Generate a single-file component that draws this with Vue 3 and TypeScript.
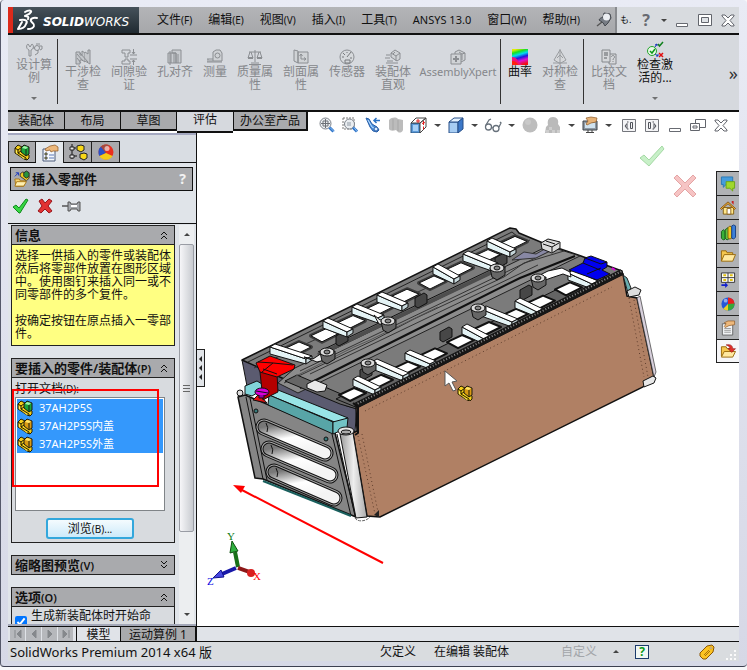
<script setup lang="ts">
import { ref } from 'vue'

interface MenuEntry { label: string; key?: string }
interface Command { icon: string; lines: string[]; active?: boolean; drop?: boolean; kind?: string; sep?: boolean; high?: boolean }
interface Doc { name: string; icon: string }

const menus: MenuEntry[] = [
  { label: '文件', key: '(F)' },
  { label: '编辑', key: '(E)' },
  { label: '视图', key: '(V)' },
  { label: '插入', key: '(I)' },
  { label: '工具', key: '(T)' },
  { label: 'ANSYS 13.0' },
  { label: '窗口', key: '(W)' },
  { label: '帮助', key: '(H)' },
]

const commands: Command[] = [
  { icon: 'study', lines: ['设计算', '例'], drop: true, high: true, sep: true },
  { icon: 'interfere', lines: ['干涉检', '查'] },
  { icon: 'clearance', lines: ['间隙验', '证'] },
  { icon: 'hole', lines: ['孔对齐'] },
  { icon: 'measure', lines: ['测量'], kind: 'narrow' },
  { icon: 'mass', lines: ['质量属', '性'] },
  { icon: 'section', lines: ['剖面属', '性'] },
  { icon: 'sensor', lines: ['传感器'] },
  { icon: 'visual', lines: ['装配体', '直观'] },
  { icon: 'xpert', lines: ['AssemblyXpert'], kind: 'wide', sep: true },
  { icon: 'curvature', lines: ['曲率'], kind: 'narrow', active: true },
  { icon: 'symmetry', lines: ['对称检', '查'], sep: true },
  { icon: 'compare', lines: ['比较文', '档'] },
  { icon: 'checkActive', lines: ['检查激', '活的...'], active: true, drop: true, high: true },
]

const tabs = [
  { name: '装配体', cls: 'first' },
  { name: '布局', cls: '' },
  { name: '草图', cls: '' },
  { name: '评估', cls: '' },
  { name: '办公室产品', cls: 'long' },
]
const currentTab = ref('评估')

const viewTools = [
  'zoomFit', 'zoomArea', 'prevView', 'sectionView', 'orient', 'arrow', 'style', 'arrow',
  'glasses', 'arrow', 'sphere', 'scene', 'arrow', 'display', 'arrow',
]
const docTools = ['tileLeft', 'tileRight', 'min', 'restore2', 'close']
const panelTabs = ['assembly', 'property', 'config', 'ball']
const taskTabs = ['chat', 'home', 'books', 'folder', 'palette', 'globe', 'form', 'recent']

const docs: Doc[] = [
  { name: '37AH2P5S', icon: 'assembly' },
  { name: '37AH2P5S内盖', icon: 'part' },
  { name: '37AH2P5S外盖', icon: 'part' },
]

/* Stepped bracket with a raised block behind it. */
const bracket = (block: string, top: string) =>
  `<path d="M1 4l3-3 4 2v3l7 5v3l-2 2-3-1-9-6z" fill="#f5cf1a" stroke="#221c00"/><path d="M1 4l3 2v3l8 5v2M4 6l4-3M4 9l3-2" fill="none" stroke="#221c00"/><path d="M2 6l1 1v3l7 4v1L2 9z" fill="#fff068"/><path d="M7 4l3-3 5 2v7l-3 2-5-4z" fill="${block}" stroke="#1a1a10"/><path d="M8 4l2-2 4 1-2 2z" fill="${top}"/><path d="M12 5v6" stroke="#1a1a10"/>`

const icons: Record<string, string> = {
  study: '<g fill="none" stroke="#8b8e92"><path d="M2 2l2 3 2-3c2 1 2 5-1 6v6H3V8C0 7 0 3 2 2z"/><circle cx="11" cy="6" r="2.500"/><path d="M7 6h2M12 8v3l-3 2M13 4h3v3l-2 1M10 2h4"/></g>',
  interfere: '<g fill="#c5c8cc" stroke="#8b8e92"><path d="M1 3h4v3h2V2l3 2v9L7 11H5v4H1z"/><path d="M10 3l3 2V1h2v14l-5-3"/><path d="M2 5l6 7M5 4l8 9M2 9l4 5" fill="none"/></g>',
  clearance: '<g fill="none" stroke="#8b8e92"><path d="M1 1h8v3H7v4H4V4H1zM1 15h8v-3H7v-2H4v2H1zM9 6h7M9 10h7M12.500 0v5M11 3l1.500 2L14 3M12.500 16v-5M11 13l1.500-2 1.500 2"/></g>',
  hole: '<g fill="#c9ccd0" stroke="#8b8e92"><path d="M1 4h8v10H1zM5 1h9v13H9V4H5z"/><path d="M4 4v10M7 4v10M11 5v9M3 2v14" fill="none"/></g>',
  measure: '<g fill="#cfd2d5" stroke="#8b8e92"><path d="M6 3l3-2h4l2 3v8H6z"/><circle cx="10.500" cy="6.500" r="2.500"/><path d="M0 13h15M1 10v3M3 11v2M5 11v2M0 10h6" fill="none"/></g>',
  mass: '<g fill="none" stroke="#8b8e92"><path d="M8 1v12M2 3h12M3 3L1 9h5L4 3M12 3l-2 6h5l-2-6M4 14h8M2 15.500h12"/><path d="M1 9h5M10 9h5" stroke-width="2"/></g>',
  section: '<g fill="#d0d3d6" stroke="#8b8e92"><path d="M1 1l4 1v12l-4-2zM5 3h10v11H5z"/><path d="M8 5v5h5M6.500 7L8 5l1.500 2M11 8.500l2 1.500-2 1.500" fill="none"/></g>',
  sensor: '<circle cx="8" cy="8" r="7" fill="#d6d9dc" stroke="#8b8e92"/><path d="M8 8l4-5M3 8h2M8 3v1M11 9h2M4 4l2 2M6 11h5v3H6z" fill="none" stroke="#77797c"/>',
  visual: '<g fill="#d0d3d6" stroke="#8b8e92"><path d="M6 4l4-3 5 3v6l-3 2-6-4z"/><path d="M6 4l5 3 4-3M11 7v5M1 6h4M0 9h5M2 12h6M1 14h12M8 5l2-2" fill="none"/></g>',
  xpert: '<g fill="#d0d3d6" stroke="#8b8e92"><path d="M1 5h10v10H1zM5 5V3l4-2 6 3v7l-4 2"/><path d="M6 7v6M3 10h6" stroke-width="2"/><path d="M9 3l3 2 3-1M12 5v6" fill="none"/></g>',
  curvature: '<defs><linearGradient id="rb" x1="0.300" y1="0" x2="0.600" y2="1"><stop offset="0" stop-color="#e4ec00"/><stop offset=".18" stop-color="#18e020"/><stop offset=".36" stop-color="#00dcf0"/><stop offset=".55" stop-color="#2018e0"/><stop offset=".75" stop-color="#e010d0"/><stop offset="1" stop-color="#f01010"/></linearGradient></defs><path d="M0 0h16v16H0z" fill="url(#rb)"/><path d="M0 8c6 0 6 6 10 8H0z" fill="#f0107a"/><path d="M0 12c4 0 5 2 7 4H0z" fill="#ff2010"/>',
  symmetry: '<g fill="#d6d8db" stroke="#999ca0"><path d="M8 1L2 11l5 3h2l5-3z"/><path d="M8 0v16M5 9l3-3 3 3M1 14h14" fill="none"/></g>',
  compare: '<g fill="#d6d8db" stroke="#85888c"><path d="M1 1h8v12H1zM9 5h6v10H8v-2"/><path d="M3 4h4M3 6h4M3 9h3" fill="none" stroke-width="1.500"/><path d="M10.500 8c0-2 3-2 3 0 0 1.500-1.500 1-1.500 3M12 12v1" fill="none"/></g>',
  checkActive: '<circle cx="5" cy="9" r="4.500" fill="#e9f7e9" stroke="#22a52a"/><path d="M3 9l2 2 3-4" fill="none" stroke="#0c9a18" stroke-width="1.500"/><path d="M8 5l2-3M8 3l2-1v2M8 12l3 2M11 12v2H9" fill="none" stroke="#1a36c0"/><path d="M11 2l1.500 2L16 0" fill="none" stroke="#10801c" stroke-width="1.500"/><path d="M12 11l4 4M16 11l-4 4" stroke="#e01010" stroke-width="1.500"/>',
  zoomFit: '<circle cx="6.500" cy="6.500" r="5.500" fill="#eef1f4" stroke="#7a8088"/><path d="M4 4h5v5H4zM6.500 2v9M2 6.500h9" fill="none" stroke="#6b7076"/><path d="M10.500 10.500l4 4" stroke="#2f74c8" stroke-width="3"/><path d="M11 10.500l4 4" stroke="#8cc0f4"/>',
  zoomArea: '<path d="M1 1h11v11H1z" fill="none" stroke="#777" stroke-dasharray="2 1"/><circle cx="7.500" cy="7" r="5" fill="#e9edf1" stroke="#7a8088"/><path d="M5 5h4v4H5z" fill="#bcc3ca"/><path d="M11 10.500l4 4" stroke="#2f74c8" stroke-width="3"/><path d="M12 10.500l3 4" stroke="#8cc0f4"/>',
  prevView: '<path d="M1 1l3 1 3 5 5 3 2 3-2 2-4-1-3-4z" fill="#4a90dc" stroke="#2a5fa8"/><path d="M3 3l4 7 5 3" fill="none" stroke="#bfe0ff"/><path d="M15 3.500H9M11.500 1L9 3.500 11.500 6" fill="none" stroke="#2a72c4" stroke-width="1.500"/><circle cx="11" cy="12" r="2" fill="#d8ecff" stroke="#2a5fa8"/>',
  sectionView: '<path d="M1 3c3-3 7-3 9-1l5 1v10c-1 3-4 3-5 2l-2-2c-3 1-6 1-7-1z" fill="#bcbcbc"/><path d="M5 2v11M10 3v11" stroke="#a6a6a6"/>',
  orient: '<path d="M0 6h9v10H0z" fill="#5c9ad8" stroke="#27507c"/><path d="M2 8h5v6H2z" fill="#a8d0f6"/><path d="M0 6l5-5h10l-6 5zM9 6l6-5v9l-6 6z" fill="#fff" stroke="#444"/><path d="M7 2v4M5 4h4M12.500 4v4M11 6.500l3-1M12.500 9.500v3" stroke="#e02020"/>',
  style: '<path d="M1 5h9v11H1z" fill="#a7cdf3" stroke="#274f88"/><path d="M1 5l5-4h9l-5 4z" fill="#e4f2ff" stroke="#274f88"/><path d="M10 5l5-4v11l-5 4z" fill="#3c78c8" stroke="#274f88"/>',
  glasses: '<g fill="none" stroke="#67717b" stroke-width="1.300"><circle cx="3.500" cy="10" r="3"/><circle cx="11" cy="11.500" r="3"/><path d="M6.500 10.500l1.500.5M1 8l3-5 2-1M14 10l2-4-1-1"/></g>',
  sphere: '<circle cx="8" cy="8" r="7.500" fill="#bdbdbd"/><circle cx="6" cy="5" r="3" fill="#c9c9c9"/>',
  scene: '<path d="M8 0c4 0 6 3 5 7l2 3v6H0l1-6 2-2C2 3 4 0 8 0z" fill="#bababa"/><path d="M1 13h3v3H1zM7 13h3v3H7zM12 13h3v3h-3zM4 10h3v3H4z" fill="#cecece"/>',
  display: '<path d="M1 4h14v9H1z" fill="#8e99a4" stroke="#3c4248"/><path d="M3 6h10v5H3z" fill="#cfe2ef"/><path d="M6 13v2M4 15.500h8M10 13v2" stroke="#444"/><path d="M4 1l5-1 6 1-1 4-5 1-4 2-1-1 2-3z" fill="#e6b277" stroke="#8e5a25" stroke-width=".7"/>',
  tileLeft: '<path d="M1.500 2.500h13v12h-13z" fill="#f4f4f6" stroke="#74767c"/><path d="M6 6.500v5L4 9zM7.500 5H6M7.500 12H6M9.500 5.500h2v6h-2z" fill="none" stroke="#50535a"/>',
  tileRight: '<path d="M1.500 2.500h13v12h-13z" fill="#f4f4f6" stroke="#74767c"/><path d="M10 6.500v5L12 9zM8.500 5H10M8.500 12H10M4.500 5.500h2v6h-2z" fill="none" stroke="#50535a"/>',
  min: '<path d="M2.500 11.500h11v3h-11z" fill="#fff" stroke="#686b72"/>',
  max: '<path d="M1.500 2.500h13v11h-13z" fill="#fff" stroke="#62656c"/><path d="M4.500 5.500h7v5h-7z" fill="#dfe2e6" stroke="#62656c"/>',
  restore2: '<path d="M5.500 2.500h10v8h-10z" fill="#fff" stroke="#62656c"/><path d="M.5 6.500h9v7h-9z" fill="#fff" stroke="#62656c"/><path d="M3 9h4v2H3z" fill="none" stroke="#62656c"/>',
  close: '<path d="M2 3h3l3 3 3-3h3v1L10 8.500l4 4.500v1h-3l-3-3-3 3H2v-1l4-4.500L2 4z" fill="#fff" stroke="#62656c"/>',
  assembly: bracket('#19a53a', '#a0f4a8'),
  part: bracket('#d99a12', '#ffe668'),
  property: '<path d="M1 4h12v12H1z" fill="#f4f8fc" stroke="#4a5a7a"/><path d="M3 8h2v2H3zM3 12h2v2H3z" fill="#d8e020" stroke="#445"/><path d="M7 10h5M7 13h5" stroke="#5a78b8"/><path d="M3 4l5-3 5-1 3 2v4l-5 0-2 1-1-2-4 1z" fill="#edb87b" stroke="#8a5420" stroke-width=".7"/>',
  config: '<path d="M2 0v15M2 4h4M2 12h5" fill="none" stroke="#111"/><path d="M0 3h4v3H0zM0 11h4v3H0z" fill="#e8e8e8" stroke="#222"/><path d="M7 2l4-1 3 1v4l-3 2-4-2zM10 10l4-1 3 1v4l-3 2-4-2z" fill="#f8d818" stroke="#222"/>',
  ball: '<circle cx="8" cy="8" r="7.500" fill="#e83020"/><path d="M8 9L3 2.500A7.500 7.500 0 0 0 1.500 12z" fill="#2850c8"/><path d="M8 9l-6.500 3a7.500 7.500 0 0 0 13 0z" fill="#f4cc18"/><path d="M3 2.500c3-3 7-2 9-1-3 1-5 3-4 7.500z" fill="#a8483c"/><circle cx="9" cy="4.500" r="2.500" fill="#fff" opacity=".6"/>',
  globe: '<circle cx="8" cy="8.500" r="7" fill="#2558d8"/><path d="M8 8.500v-7a7 7 0 0 1 7 7z" fill="#e82020"/><path d="M8 8.500L15 8a7 7 0 0 1-7 7.500z" fill="#38a838"/><path d="M8 8.500v7c-2 0-4-1-5-2z" fill="#f0d020"/><circle cx="5.500" cy="5" r="2" fill="#fff" opacity=".5"/>',
  insert: '<path d="M1 9h5l1 2h6l-2 6H2z" fill="#f9d774" stroke="#a87410"/><path d="M3 12h11l-3 5H1z" fill="#fff0b0" stroke="#a87410"/><path d="M1 6l4-4M2 2h3v3" fill="none" stroke="#1030c0"/><path d="M7 3l3-2 3 2 4 3v2l-3 3-7-5z" fill="#f0cc20" stroke="#333"/><path d="M11 2l3-2 3 2v4l-3 2-3-2z" fill="#28943c" stroke="#222"/>',
  ok: '<path d="M1 9l3-2 3 3 7-9 2 1-8 13H7z" fill="#36d642" stroke="#0f8a1b"/>',
  cancel: '<path d="M2 3l3-2 3 4 4-4 3 2-4 5 4 5-3 2-4-4-4 4-3-2 4-5z" fill="#e23232" stroke="#98151b"/>',
  pushpin: '<path d="M0 8h7" stroke="#555" stroke-width="1.500"/><path d="M6 4h2l1 2h6l1-2h2v9h-2l-1-2H9l-1 2H6z" fill="#a4a7ac" stroke="#555"/><path d="M9 8h6" stroke="#fff" stroke-width="2"/>',
  chat: '<path d="M1 1h12v8H6l-3 3V9H1z" fill="#469cdc" stroke="#2978b4"/><path d="M6 6h9v7h-2v3l-3-3H6z" fill="#a0d82c" stroke="#6ca612"/>',
  home: '<path d="M3 8h11v7H3z" fill="#ffe88c" stroke="#856010"/><path d="M0 9l8-7 8 7-1 1-7-6-7 6z" fill="#f8c038" stroke="#855010"/><path d="M12 1h2v4l-2-2z" fill="#c82020"/><path d="M7 9h4v6H7z" fill="#fff" stroke="#906820"/>',
  books: '<path d="M1 8l2-2 2 2v8l-2 1-2-2z" fill="#38b038" stroke="#145c18"/><path d="M5 6l3-2 2 2v9l-3 2-2-2z" fill="#60c040" stroke="#145c18"/><path d="M8 4l2-2 2 2v11l-2 1-2-1z" fill="#f0c820" stroke="#80600a"/><path d="M12 2l2-1 2 1v12l-2 2-2-1z" fill="#3c80d8" stroke="#163e80"/>',
  folder: '<path d="M1 14V3h5l1 2h6v3" fill="#f5c74e" stroke="#98680a"/><path d="M1 14l3-7h12l-3 7z" fill="#ffe9a0" stroke="#98680a"/>',
  palette: '<path d="M1 1h14v10H1zM8 1v10M1 6h14" fill="#fff" stroke="#333"/><path d="M3 3.500h3M10 3.500h3M10 8.500h3M3 8.500h3" stroke="#e0c010" stroke-width="2"/><path d="M1 13h4v-2l3 3-3 3v-2H1z" fill="#1020d0"/>',
  form: '<path d="M2 4h11v12H2z" fill="#f0f2f4" stroke="#666"/><path d="M4 9h7M4 11h7M4 13h7" stroke="#999"/><path d="M4 3l4-2 7 0v4l-6 1-4 2-1-1 2-3z" fill="#edb87b" stroke="#8a5420" stroke-width=".7"/>',
  recent: '<path d="M1 14V4h5l1 2h5v3" fill="#f5c74e" stroke="#98680a"/><path d="M1 15l3-6h12l-3 6z" fill="#ffe9a0" stroke="#98680a"/><path d="M6 2c5-1 7 1 7 4h3l-4 4-4-4h2c0-2-1-3-4-4z" fill="#e03028" stroke="#8c1010" stroke-width=".6"/>',
  tag: '<path d="M1 9l7-7 5-1 2 2-1 5-7 7-3 0-3-3z" fill="#fbc322" stroke="#8a5606"/><path d="M5 11l5-5M6 12l5-5" stroke="#a8720c"/><circle cx="12" cy="4" r="1" fill="#fff" stroke="#8a5606" stroke-width=".5"/>',
  pin: '<path d="M1 14l5-4" stroke="#555" stroke-width="1.500"/><path d="M3 8c1-2 2-2 4-3l1-4 6 1 1 4-3 5-3 3c-1-1-1-3-3-4z" fill="#777c84" stroke="#44484e"/><circle cx="10.500" cy="5" r="3.500" fill="#eceef2"/>',
}

/* Window openings of the tray, spaced evenly along the pack. */
const openings = Array.from({ length: 9 }, (_, i) => i)
const rearOpening = (i: number) => quad(297 + i * 27, 348 - i * 13.2)
const frontOpening = (i: number) => quad(352 + i * 27, 394 - i * 13.2)
function quad(x: number, y: number): string {
  return `${x - 13},${y + 1} ${x + 2},${y - 6} ${x + 14},${y - 1} ${x - 2},${y + 7}`
}

/* Bus bars: start and end of each strip's upper edge. */
const bars = [
  [270, 347, 306, 358], [323, 321, 347, 331], [352, 307, 378, 317], [377, 295, 402, 305],
  [433, 267, 454, 278], [463, 254, 492, 265], [487, 241, 510, 251],
  [568, 273, 592, 283], [515, 301, 537, 311], [481, 309, 512, 321], [462, 327, 484, 338],
  [405, 353, 430, 363], [372, 362, 403, 375], [353, 379, 375, 389],
]
const barTop = (b: number[]) => `${b[0]},${b[1]} ${b[0] + 5},${b[1] - 3} ${b[2] + 6},${b[3] - 2} ${b[2]},${b[3] + 1}`
const barFace = (b: number[]) => `${b[0]},${b[1]} ${b[2]},${b[3] + 1} ${b[2]},${b[3] + 6} ${b[0]},${b[1] + 7}`
const barEnd = (b: number[]) => `${b[2]},${b[3] + 1} ${b[2] + 6},${b[3] - 2} ${b[2] + 6},${b[3] + 2} ${b[2]},${b[3] + 6}`
const bolts = [[327, 352], [388, 321], [497, 268], [368, 363], [478, 308], [538, 278]]
const clips = [[341, 336], [420, 298], [445, 332], [525, 290], [365, 370], [500, 258]]
const slots = [[264, 427, 325, 453], [269, 449, 330, 475], [274, 472, 334, 498]]
</script>

<template>
  <div class="window">
    <header class="titlebar">
      <div class="brand">
        <svg class="ds" viewBox="0 0 22 24" aria-hidden="true">
          <g fill="none" stroke="#fff" stroke-width="2" stroke-linejoin="round" stroke-linecap="round">
            <path d="M8 4c3-2 7-2 6 0-1 2-4 3-6 4 3 0 4 1 3 3" />
            <path d="M3 12c6-1 8 1 6 4-1 3-4 5-8 5l4-7" />
            <path d="M20 10c-4-1-7 1-6 3 1 2 4 3 3 5-1 3-4 3-6 3" />
          </g>
        </svg>
        <span class="brand-name"><b>SOLID</b>WORKS</span>
      </div>
      <nav class="menus">
        <button v-for="m in menus" :key="m.label" type="button" :class="{ latin: !m.key }">{{ m.label }}<small v-if="m.key">{{ m.key }}</small></button>
        <svg class="ic pin" viewBox="0 0 16 16" v-html="icons.pin" />
      </nav>
      <div class="win-tools">
        <span class="partial">も.</span>
        <button type="button" class="help">?</button>
        <i class="down" />
        <button type="button" aria-label="最小化"><svg class="ic" viewBox="0 0 16 16" v-html="icons.min" /></button>
        <button type="button" aria-label="还原"><svg class="ic" viewBox="0 0 16 16" v-html="icons.max" /></button>
        <button type="button" aria-label="关闭"><svg class="ic" viewBox="0 0 16 16" v-html="icons.close" /></button>
      </div>
    </header>

    <div class="ribbon">
      <button
        v-for="c in commands" :key="c.icon" type="button" class="cmd"
        :class="[c.kind, { active: c.active, sep: c.sep, high: c.high }]"
      >
        <svg class="ic" viewBox="0 0 16 16" v-html="icons[c.icon]" />
        <span v-for="l in c.lines" :key="l">{{ l }}</span>
        <i v-if="c.drop" class="down" />
      </button>
      <button type="button" class="more" aria-label="更多">»</button>
    </div>

    <div class="tabrow">
      <div class="tabs">
        <button
          v-for="t in tabs" :key="t.name" type="button" :class="[t.cls, { on: t.name === currentTab }]"
          @click="currentTab = t.name"
        >{{ t.name }}</button>
      </div>
      <div class="viewtools">
        <template v-for="(v, i) in viewTools" :key="i">
          <i v-if="v === 'arrow'" class="down slot" />
          <button v-else type="button" :aria-label="v"><svg class="ic" viewBox="0 0 16 16" v-html="icons[v]" /></button>
        </template>
        <span class="push" />
        <button v-for="d in docTools" :key="d" type="button" :aria-label="d"><svg class="ic" viewBox="0 0 16 16" v-html="icons[d]" /></button>
      </div>
    </div>

    <main class="body">
      <aside class="panel">
        <div class="ptabs">
          <button v-for="(p, i) in panelTabs" :key="p" type="button" :class="{ on: i === 1 }" :aria-label="p">
            <svg class="ic" viewBox="0 0 16 16" v-html="icons[p]" />
          </button>
        </div>
        <div class="phead">
          <div class="ptitle">
            <svg class="ic wide-ic" viewBox="0 0 18 18" v-html="icons.insert" />
            <h1>插入零部件</h1>
            <button type="button" class="q">?</button>
          </div>
          <div class="pact">
            <button type="button" aria-label="确定"><svg class="ic" viewBox="0 0 16 16" v-html="icons.ok" /></button>
            <button type="button" aria-label="取消"><svg class="ic" viewBox="0 0 16 16" v-html="icons.cancel" /></button>
            <button type="button" aria-label="保持可见"><svg class="ic wide-ic" viewBox="0 0 18 16" v-html="icons.pushpin" /></button>
          </div>
        </div>
        <div class="pscroll">
          <div class="groups">
            <section class="group">
              <button type="button" class="ghead"><span>信息</span><svg viewBox="0 0 8 10"><path d="M1 5l3-3 3 3M1 9l3-3 3 3" /></svg></button>
              <div class="info">
                <p>选择一供插入的零件或装配体<br>然后将零部件放置在图形区域<br>中。使用图钉来插入同一或不<br>同零部件的多个复件。</p>
                <p>按确定按钮在原点插入一零部<br>件。</p>
              </div>
            </section>
            <section class="group">
              <button type="button" class="ghead"><span>要插入的零件/装配体<small>(P)</small></span><svg viewBox="0 0 8 10"><path d="M1 5l3-3 3 3M1 9l3-3 3 3" /></svg></button>
              <div class="gbody">
                <span id="docs-label" class="lbl">打开文档<small>(D):</small></span>
                <ul class="list" role="listbox" aria-labelledby="docs-label" aria-multiselectable="true">
                  <li v-for="d in docs" :key="d.name" role="option" aria-selected="true">
                    <svg class="ic" viewBox="0 0 16 16" v-html="icons[d.icon]" />{{ d.name }}
                  </li>
                </ul>
                <button type="button" class="browse">浏览<small>(B)...</small></button>
                <div class="mark" />
              </div>
            </section>
            <section class="group">
              <button type="button" class="ghead"><span>缩略图预览<small>(V)</small></span><svg viewBox="0 0 8 10"><path d="M1 1l3 3 3-3M1 5l3 3 3-3" /></svg></button>
            </section>
            <section class="group">
              <button type="button" class="ghead"><span>选项<small>(O)</small></span><svg viewBox="0 0 8 10"><path d="M1 5l3-3 3 3M1 9l3-3 3 3" /></svg></button>
              <label class="opt"><input type="checkbox" checked><span>生成新装配体时开始命</span></label>
            </section>
          </div>
          <div class="sbar">
            <i class="up" />
            <div class="thumb"><i /><i /><i /></div>
            <i class="down" />
          </div>
        </div>
      </aside>

      <section class="viewport">
        <svg class="scene" viewBox="197 133 542 493" preserveAspectRatio="xMinYMin meet" role="img" aria-label="装配体模型">
          <defs>
            <linearGradient id="slot" x1="0" y1="0" x2="0.400" y2="1"><stop offset="0" stop-color="#777" /><stop offset=".5" stop-color="#fff" /><stop offset="1" stop-color="#f4f4f4" /></linearGradient>
            <linearGradient id="post" x1="0" y1="0" x2="1" y2="0"><stop offset="0" stop-color="#999" /><stop offset=".5" stop-color="#eee" /><stop offset="1" stop-color="#aaa" /></linearGradient>
          </defs>

          <g stroke-linejoin="round">
            <path d="M242 360l5 26 32 14 76 32 2-26z" fill="#5b5b70" stroke="#111" />
            <path d="M242 360L510 228l6 1 3 4 24 10 38 13 41 15 1 5-267 132-8-2-66-28z" fill="#7b7b7b" stroke="#111" stroke-width="1.500" />
            <path d="M248 362L512 232l6 5" fill="none" stroke="#222" />
            <path d="M254 368L530 240" fill="none" stroke="#333" />
            <path d="M295 368L548 246l32 10-282 137-20-10z" fill="#8c8c8c" stroke="#222" />
            <path d="M300 371L552 250M310 374L538 265M284 383l90-43 40-21 90-42 20-14 40-12" fill="none" stroke="#333" />
            <path d="M300 388l60-30 60-30 100-50 55-22" fill="none" stroke="#111" stroke-width="2" />
            <path d="M318 355L505 266" stroke="#4e4e4e" stroke-width="4" /><path d="M318 352L505 263" stroke="#111" />
            <path d="M512 260l12-8 12 2 14-8 6 2-20 10z" fill="#8888a4" stroke="#333" />
            <path d="M285 381l12-6 58 25 5 10-20-6z" fill="#666" stroke="#111" />
            <path d="M296 376l58-29 14-6 70-34" fill="none" stroke="#555" />
            <path d="M336 399L590 273l26 8-258 127z" fill="#646464" stroke="#111" />
          </g>

          <g stroke="#111" stroke-linejoin="round">
            <g fill="#666"><polygon v-for="i in openings" :key="'rs' + i" :points="rearOpening(i)" stroke-width="4" stroke="#3c3c3c" /></g>
            <g fill="#fff"><polygon v-for="i in openings" :key="'r' + i" :points="rearOpening(i)" /></g>
            <g fill="#fff"><polygon v-for="i in openings" :key="'f' + i" :points="frontOpening(i)" stroke-width="2" /></g>
            <path v-for="(c, i) in clips" :key="'c' + i" :d="`M${c[0] - 5} ${c[1]}l9-5 3 2v8l-9 5-3-2z`" fill="#474747" />
            <template v-for="(b, i) in bars" :key="'b' + i">
              <polygon :points="barFace(b)" fill="#e4f3f5" />
              <polygon :points="barTop(b)" fill="#fff" />
              <polygon :points="barEnd(b)" fill="#c4d4d8" />
            </template>
            <path d="M304 357l9 2 9-6 6-3 6 3-5 6-12 3z" fill="#eee" />
            <path d="M374 315l6 5 7-2 6 2-4 5-10-1z" fill="#eee" />
            <path d="M570 272l-8-4-14 3-14 7 3 5 14-5 12-4 8 3z" fill="#fff" />
            <template v-for="(b, i) in bolts" :key="'n' + i">
              <path :d="`M${b[0] - 7} ${b[1]}l2 9 5 3 8-5v-8z`" fill="#666" />
              <ellipse :cx="b[0]" :cy="b[1]" rx="7" ry="4" fill="#ddd" />
              <ellipse :cx="b[0]" :cy="b[1]" rx="3" ry="2" fill="#888" />
            </template>
            <path d="M541 243l7-4 12 3v6l-8 5-10-4z" fill="#ddd" /><path d="M543 244l9 3 7-4M552 247v5M546 241l9 3" fill="none" />
            <path d="M307 384l8-4 12 5-2 6-8 1-10-4z" fill="#e8e8e8" />
          </g>

          <path d="M356 408L623 274l4 22 10 2 17 79-11 10-263 130-13-1-14-83 4-2z" fill="#b08064" stroke="#111" stroke-width="1.500" />
          <path d="M355 406L622 272" stroke="#161616" stroke-width="6" />
          <path d="M355 405L622 271" stroke="#8c8c8c" stroke-width="2" stroke-dasharray="1 2" />
          <path d="M365 411L612 287M358 436l17 78M362 434l16 78M629 298l15 79M634 300l14 77" fill="none" stroke="#5e3d2c" stroke-dasharray="1 3" />
          <path d="M637 298l3-2 16 76-2 5z" fill="#d8d0dc" stroke="#333" stroke-width=".7" />
          <path d="M623 275l4 3 4 10-3 5z" fill="#69afb0" stroke="#222" />
          <path d="M627 291l8-4 6 3-2 5-10 2z" fill="#ddd" stroke="#111" />
          <path d="M643 381l10-5 3 2-2 5-10 4z" fill="#e8e8e8" stroke="#111" />
          <path d="M374 515l5-5v7z" fill="#222" />

          <g stroke="#111" stroke-linejoin="round">
            <path d="M238 397l7-2 90 38 21 84-93-38-8-1z" fill="#858585" stroke-width="1.500" />
            <path d="M246 397l17 82M250 398l17 82M332 434l19 82M337 434l18 82" fill="none" />
            <path d="M263 481l88 35" stroke="#195f5d" stroke-width="2" />
            <template v-for="(s, i) in slots" :key="'s' + i">
              <line :x1="s[0]" :y1="s[1]" :x2="s[2]" :y2="s[3]" stroke-width="17" stroke-linecap="round" />
              <line :x1="s[0]" :y1="s[1]" :x2="s[2]" :y2="s[3]" stroke="#a6a6a6" stroke-width="15" stroke-linecap="round" />
              <line :x1="s[0]" :y1="s[1]" :x2="s[2]" :y2="s[3]" stroke-width="13" stroke-linecap="round" />
              <line :x1="s[0]" :y1="s[1]" :x2="s[2]" :y2="s[3]" stroke="url(#slot)" stroke-width="11" stroke-linecap="round" />
              <path :d="`M${s[0] + 2} ${s[1] - 4}q3 5 1 9`" fill="none" />
            </template>
            <circle cx="256" cy="411" r="2" fill="#397b7b" /><circle cx="326" cy="439" r="2" fill="#397b7b" />
            <path d="M340 434l13-1 14 84-11 1z" fill="url(#post)" />
            <path d="M355 518c2 4 11 4 15-1" fill="none" stroke="#666" stroke-dasharray="3 1" />
            <path d="M253 400l14 3-8-9z" fill="#e01010" />
            <path d="M245 386l12-5 5 3v6l-10 6-7-2z" fill="#82d5da" />
            <path d="M269 395l9-5 70 28-11 5z" fill="#98e4e6" />
            <path d="M269 395l64 27v12l-65-29z" fill="#58a5a7" />
            <path d="M333 422l15-4-1 10-14 6z" fill="#72c3c5" />
            <ellipse cx="346" cy="431" rx="8" ry="4" fill="#e6e6e6" /><ellipse cx="346" cy="432" rx="5" ry="2" fill="#aaa" />
            <path d="M353 403l5 4v26l-3 2" fill="none" stroke-width="2" />
            <circle cx="240" cy="393" r="3" fill="#ddd" />
            <path d="M260 372l3 28 9-5 6-3-1-19z" fill="#b40000" />
            <path d="M256 363l14-7 25 9-1 4-17 8-17-5z" fill="#f00" />
            <path d="M262 372l11-9 20 2M273 363l-15-1M277 374l-14-5" fill="none" />
            <ellipse cx="262" cy="392" rx="7" ry="4" fill="#d800d8" /><path d="M256 391l12 2M259 395v3h5v-3" fill="#90a" />
            <path d="M569 270l14-7 2-5 6-2 16 6v5l-5 3 8 4-13 6z" fill="#0000f0" />
            <path d="M585 258l16 6 6-2M583 263l17 7M587 274l14-6" fill="none" />
          </g>
          <path d="M612 268l3 2" stroke="#e000e0" stroke-width="2" />

          <path d="M445 371v15l4-3 4 8 3-1-4-8 5-1z" fill="#fff" stroke="#555" />
          <svg x="457" y="385" width="16" height="16" viewBox="0 0 16 16" v-html="icons.part" />
          <path d="M383 563L240 489" stroke="#f00" stroke-width="2" /><path d="M233 485l12 1-4 7z" fill="#f00" />

          <path d="M640 158l4-3 5 5 13-14 2 3-15 17z" fill="#c8f0c8" stroke="#a4d8a4" />
          <path d="M674 178l3-3 8 8 8-8 3 3-8 8 8 8-3 3-8-8-8 8-3-3 8-8z" fill="#f6c4c4" stroke="#e4a4a4" />

          <path d="M238 567l-3-15" stroke="#187018" stroke-width="4" /><path d="M232 541l6 10-8 2z" fill="#30b040" stroke="#0c500c" />
          <path d="M238 568l14 5" stroke="#8c1818" stroke-width="4" /><circle cx="251" cy="573" r="4" fill="#d82020" />
          <path d="M236 568l-14 6" stroke="#1818a8" stroke-width="4" /><path d="M213 578l8-8 3 7z" fill="#4848e0" stroke="#10108c" />
          <g class="axis"><text x="227" y="540" fill="#0a7a14">Y</text><text x="253" y="580" fill="#f00">X</text><text x="207" y="585" fill="#0000e0">Z</text></g>
        </svg>
        <div class="taskpane">
          <button v-for="(t, i) in taskTabs" :key="t" type="button" :class="{ on: i === 7 }" :aria-label="t">
            <svg class="ic" viewBox="0 0 16 17" v-html="icons[t]" />
          </button>
        </div>
        <button type="button" class="splitter" aria-label="折叠面板"><i /><i /><i /></button>
      </section>
    </main>

    <div class="sheets">
      <div class="nav">
        <button type="button" aria-label="第一个"><svg viewBox="0 0 12 12"><path d="M3 2v8M9 2L5 6l4 4z" /></svg></button>
        <button type="button" aria-label="上一个"><svg viewBox="0 0 12 12"><path d="M8 2L4 6l4 4z" /></svg></button>
        <button type="button" aria-label="下一个"><svg viewBox="0 0 12 12"><path d="M4 2l4 4-4 4z" /></svg></button>
        <button type="button" aria-label="最后一个"><svg viewBox="0 0 12 12"><path d="M9 2v8M3 2l4 4-4 4z" /></svg></button>
      </div>
      <button type="button" class="sheet on">模型</button>
      <button type="button" class="sheet study">运动算例 1</button>
    </div>
    <footer class="status">
      <span>SolidWorks Premium 2014 x64 版</span>
      <span>欠定义</span>
      <span>在编辑 装配体</span>
      <span class="dim">自定义</span>
      <i class="up" />
      <button type="button" class="qhelp">?</button>
      <svg class="ic" viewBox="0 0 16 16" v-html="icons.tag" />
      <svg class="grip" viewBox="0 0 12 12"><path d="M10 1v2M10 5v2M10 9v2M6 5v2M6 9v2M2 9v2" stroke="#fafafa" stroke-width="2" /></svg>
    </footer>
  </div>
</template>

<style>
body { margin: 0; background: #f8f8fa; }
</style>

<style scoped>
.window {
  box-sizing: border-box;
  display: flex;
  flex-direction: column;
  height: calc(100vh - 3px);
  min-height: 480px;
  padding: 7px 8px 5px 7px;
  border-left: 1px solid #55586a;
  border-bottom: 1px solid #3c3f50;
  border-radius: 4px;
  background: linear-gradient(#e9ebf5, #d6d8e6);
  font: 12px/14px "Noto Sans", "Noto Sans CJK SC", sans-serif;
  color: #111;
  overflow: hidden;
}
button {
  font: inherit;
  color: inherit;
  padding: 0;
  margin: 0;
  border: 0;
  background: none;
  white-space: nowrap;
}
small { font-size: 10px; }
.ic { display: block; width: 16px; height: 16px; flex: none; overflow: visible; }
.wide-ic { width: 18px; }
.down, .up {
  display: block;
  flex: none;
  width: 0;
  height: 0;
  border: 3px solid transparent;
}
.down { border-top-color: #444; border-bottom-width: 0; }
.up { border-bottom-color: #444; border-top-width: 0; }

.titlebar { display: flex; height: 26px; flex: none; border-bottom: 2px solid #111; background: #d8dbdf; }
.brand {
  box-sizing: border-box;
  display: flex;
  align-items: center;
  gap: 4px;
  width: 131px;
  padding-left: 4px;
  border-left: 5px solid #dc2a1b;
  background: linear-gradient(#46525b, #202a31);
  color: #fff;
}
.ds { width: 22px; height: 24px; }
.brand-name { font: italic 12px/24px "DejaVu Sans", sans-serif; padding-top: 3px; }
.menus {
  display: flex;
  align-items: center;
  gap: 16px;
  flex: 0 0 458px;
  padding-left: 18px;
  background: linear-gradient(#b3b4b7, #a6a7aa);
  border-right: 2px solid #888a8e;
  overflow: hidden;
}
.menus .latin { font-size: 11px; }
.win-tools { display: flex; flex: 1; align-items: center; justify-content: flex-end; gap: 7px; padding: 0 3px 0 2px; }
.win-tools .partial { width: 13px; margin-right: -2px; font-size: 9px; }
.help { width: 16px; font: bold 16px/20px "Noto Sans", sans-serif; color: #686b72; }

.ribbon {
  position: relative;
  display: flex;
  height: 75px;
  flex: none;
  padding-left: 3px;
  border-bottom: 2px solid #111;
  background: #d6d9de;
}
.cmd {
  box-sizing: border-box;
  display: flex;
  flex-direction: column;
  align-items: center;
  width: 46px;
  padding-top: 14px;
  color: #85878b;
  line-height: 13px;
}
.cmd.high { padding-top: 7px; }
.cmd .down { margin: auto 0 10px; opacity: .7; }
.cmd.narrow { width: 34px; }
.cmd.wide { width: 84px; font-size: 11px; }
.cmd.active { color: #111; }
.cmd.sep { position: relative; margin-right: 3px; }
.cmd.sep::after { content: ""; position: absolute; right: -1px; top: 4px; bottom: 6px; width: 1px; background: #333; }
.more { margin-left: auto; padding-right: 1px; font-size: 18px; color: #333; }

.tabrow { display: flex; height: 21px; flex: none; background: #fff; }
.tabs { display: flex; align-items: flex-start; }
.tabs button {
  box-sizing: border-box;
  width: 56px;
  height: 19px;
  border-right: 1px solid #111;
  border-bottom: 2px solid #111;
  background: #a9aaad;
}
.tabs .first { width: 57px; }
.tabs .long { width: 75px; border-right-width: 2px; border-left: 1px solid #111; }
.tabs .on { height: 23px; margin-top: -2px; padding-bottom: 1px; border-right: 0; background: #d6d9de; }
.viewtools { display: flex; flex: 1; align-items: center; gap: 7px; padding: 5px 10px 0 11px; }
.viewtools .slot { border-width: 3px 3px 0 4px; }
.push { flex: 1; margin-right: -14px; }

.body { display: flex; flex: 1; min-height: 0; }
.panel {
  display: flex;
  flex-direction: column;
  flex: 0 0 188px;
  border-right: 1px solid #111;
  background: #e0e4e9;
}
.ptabs { display: flex; padding-top: 6px; border-top: 2px solid #a4a8c0; border-bottom: 1px solid #111; background: #d9dde3; }
.ptabs button {
  box-sizing: border-box;
  display: grid;
  place-items: center;
  width: 28px;
  height: 21px;
  border: 1px solid #222;
  border-bottom: 0;
  border-left-width: 0;
  background: #a9aaad;
}
.ptabs button:first-child { border-left-width: 1px; }
.ptabs .on { background: #e4e8ec; margin-bottom: -1px; height: 22px; }
.phead { padding: 4px 3px 0 2px; border-bottom: 1px solid #111; }
.ptitle {
  display: flex;
  align-items: center;
  gap: 1px;
  height: 22px;
  padding: 0 6px 0 2px;
  border: 1px solid #111;
  background: #a9aaad;
}
h1 { flex: 1; margin: 0; font-size: 13px; line-height: 20px; font-weight: 600; }
.q { font-weight: bold; font-size: 14px; color: #f2f2f2; }
.pact { display: flex; align-items: center; gap: 9px; height: 32px; padding-left: 2px; }
.pact button { padding-bottom: 3px; }
.pscroll { display: flex; flex: 1; gap: 4px; min-height: 0; padding: 1px 2px 0 3px; border-bottom: 2px solid #a4a8b8; }
.groups { display: flex; flex-direction: column; gap: 12px; flex: 1; min-width: 0; overflow: hidden; }
.group { flex: none; border: 1px solid #222; background: #d8dbdf; }
.ghead {
  display: flex;
  align-items: center;
  justify-content: space-between;
  width: 100%;
  height: 18px;
  padding: 0 6px 0 3px;
  background: #a9aaad;
  font-size: 13px;
  font-weight: 600;
}
.ghead small { font-size: 11px; }
.ghead svg { width: 8px; height: 10px; fill: none; stroke: #111; }
.info {
  display: grid;
  gap: 13px;
  padding: 4px 3px 5px;
  border-top: 1px solid #222;
  background: #ffff82;
  line-height: 13px;
  white-space: nowrap;
}
.info p { margin: 0; }
.gbody { position: relative; display: flex; flex-direction: column; padding: 4px 9px 3px 3px; border-top: 1px solid #222; }
.lbl { line-height: 14px; padding-bottom: 1px; }
.list { height: 112px; margin: 0; padding: 0; border: 1px solid #808488; background: #fff; list-style: none; }
.list li { display: flex; align-items: center; gap: 6px; height: 18px; margin: 0 1px; background: #3498fc; color: #fff; font-size: 11px; }
.list li:first-child { margin-top: 1px; }
.browse {
  align-self: center;
  width: 88px;
  height: 21px;
  margin: 7px 0 0;
  border: 2px solid #33a7dc;
  border-radius: 3px;
  background: linear-gradient(#f4fbfe, #cdeafa);
  line-height: 16px;
}
.mark { position: absolute; left: 0; top: 11px; width: 143px; height: 94px; border: 2px solid #f00; pointer-events: none; }
.opt { display: flex; align-items: center; gap: 4px; padding: 1px 3px; border-top: 1px solid #222; white-space: nowrap; }
.opt input { width: 12px; height: 12px; margin: 8px 0 0; }
.opt span { padding-bottom: 4px; }
.sbar { display: flex; flex-direction: column; align-items: center; justify-content: space-between; width: 15px; background: #eceef0; }
.sbar .up { margin: 8px 0; }
.sbar .down { margin: 6px 0 8px; }
.thumb {
  box-sizing: border-box;
  display: flex;
  flex-direction: column;
  justify-content: center;
  align-items: center;
  gap: 2px;
  width: 15px;
  flex: 0 1 288px;
  margin-bottom: auto;
  border: 1px solid #999ca4;
  border-radius: 2px;
  background: linear-gradient(90deg, #f6f6f8, #c8cbd0);
}
.thumb i { width: 7px; height: 1px; background: #666; }

.viewport { position: relative; display: grid; grid-template: minmax(0, 1fr) / minmax(0, 1fr); flex: 1; min-width: 0; background: #fff; }
.scene { grid-area: 1 / 1; width: 100%; height: 100%; }
.axis text { font: 11px "Liberation Serif", serif; }
.taskpane { grid-area: 1 / 1; justify-self: end; align-self: start; margin-top: 38px; width: 23px; }
.taskpane button {
  box-sizing: border-box;
  display: grid;
  place-items: center;
  width: 23px;
  height: 24px;
  border: solid #222;
  border-width: 1px 0 0 1px;
  background: #b0b2b5;
}
.taskpane .on { background: #f6f6f8; border-bottom-width: 1px; }
.splitter {
  position: absolute;
  left: 0;
  top: 216px;
  display: flex;
  flex-direction: column;
  justify-content: center;
  align-items: center;
  gap: 3px;
  width: 8px;
  height: 38px;
  border: 1px solid #222;
  border-left: 0;
  background: #e2e5e9;
}
.splitter i { border: 3px solid transparent; border-right-color: #222; border-left-width: 0; }

.sheets { display: flex; flex: none; height: 14px; border-top: 1px solid #111; border-bottom: 1px solid #111; background: #e0e3e8; }
.nav { display: flex; gap: 1px; padding: 0 3px 0 2px; }
.nav button { width: 15px; height: 14px; background: #b6b8bc; }
.nav svg { display: block; width: 12px; height: 12px; margin: 0 auto; fill: #85888c; stroke: #85888c; }
.sheet { box-sizing: border-box; width: 45px; border-left: 1px solid #111; border-right: 1px solid #111; line-height: 13px; }
.sheet.study { width: 76px; border-left: 0; border-right-width: 2px; background: #a9aaad; }
.status {
  display: grid;
  grid-template-columns: 1fr 54px 127px 52px 22px 64px 26px 12px;
  align-items: center;
  flex: none;
  height: 19px;
  padding: 0 2px;
  background: #d9dcdf;
  white-space: nowrap;
}
.status > span:first-child { font-size: 13px; }
.dim { color: #a2a5a9; }
.qhelp { box-sizing: border-box; width: 14px; height: 14px; border: 1px solid #1c3c6c; background: #f2f8f4; color: #0c9a18; font-weight: bold; line-height: 12px; }
.grip { width: 12px; height: 12px; align-self: end; }
</style>
